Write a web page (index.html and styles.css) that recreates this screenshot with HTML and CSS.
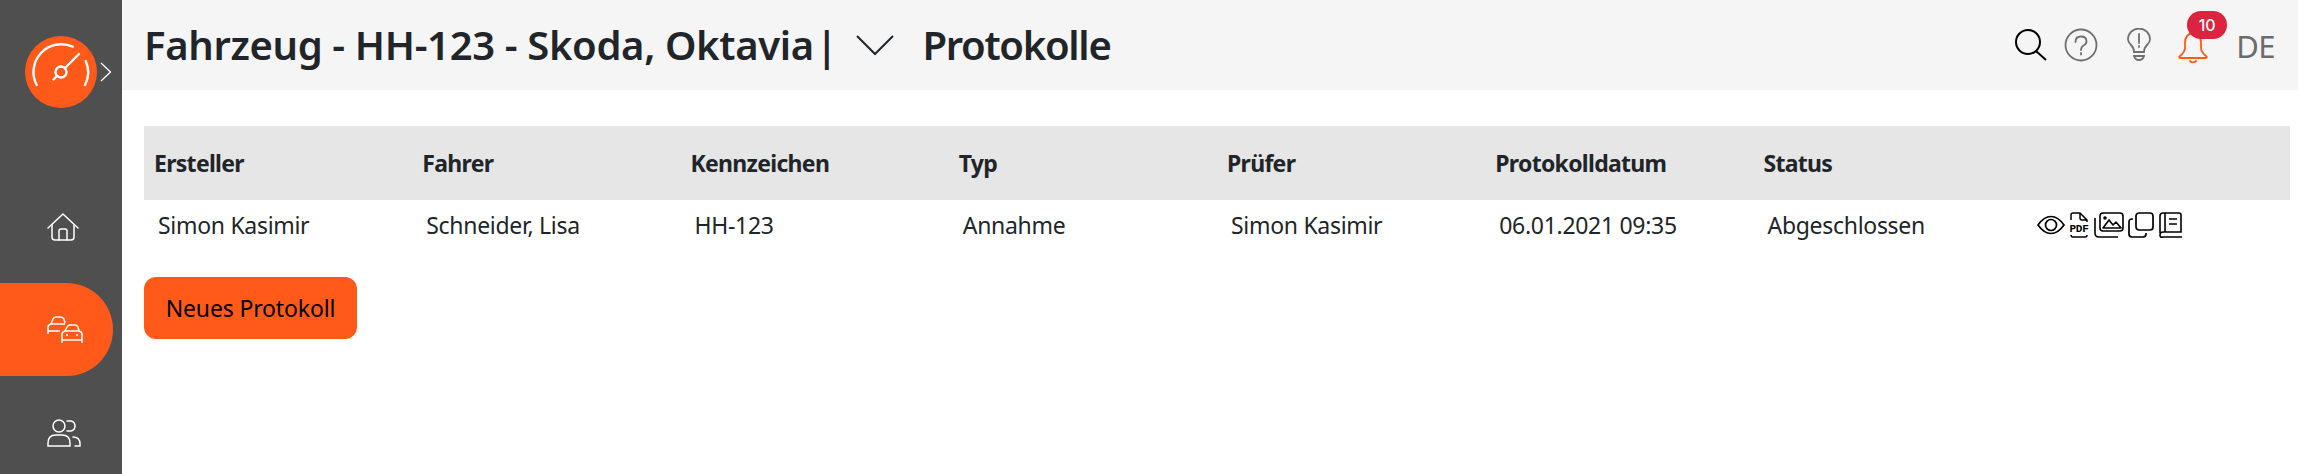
FILE: index.html
```html
<!DOCTYPE html>
<html lang="de">
<head>
<meta charset="utf-8">
<title>Protokolle</title>
<link rel="stylesheet" href="styles.css">
</head>
<body>
<div class="app">
  <aside class="sidebar">
    <div class="logo-row">
      <div class="logo">
        <svg viewBox="0 0 72 72" width="72" height="72" fill="none" stroke="#fff" stroke-width="2.400" stroke-linecap="round">
          <path d="M11.700 49A27.800 27.800 0 0 1 47.700 10.700"/>
          <path d="M60.700 25A27.500 27.500 0 0 1 60 49"/>
          <circle cx="36" cy="36" r="5.500"/>
          <path d="M40 32L54 18M32 40L28.500 43.500"/>
        </svg>
      </div>
      <svg class="chev" viewBox="0 0 12 20" width="12" height="20" fill="none" stroke="#fff" stroke-width="1.300"><path d="M1 1L10.500 10L1 19"/></svg>
    </div>
    <nav class="nav">
      <a class="nav-item">
        <svg viewBox="0 0 32 28" width="32" height="28" fill="none" stroke="#fff" stroke-width="1.500" stroke-linecap="round" stroke-linejoin="round"><path d="M1 15L16 1L31 15"/><path d="M5 12V24Q5 27 8 27H24Q27 27 27 24V12"/><path d="M12 27V18Q12 16 14 16H18Q20 16 20 18V27"/></svg>
      </a>
      <a class="nav-item active">
        <svg viewBox="0 0 36 28" width="36" height="28" fill="none" stroke="#fff" stroke-width="1.500" stroke-linejoin="round"><path d="M1 18V11Q1 9 4 8L6 3Q7 1 9 1H13Q16 1 17 3L18 7M4 8H18M1 15H13"/><path d="M15 27V18Q15 16 18 15L20 11Q21 9 23 9H28Q30 9 31 11L32 15Q35 16 35 18V27M15 24H35M18 15H32M19 19H21M29 19H31"/></svg>
      </a>
      <a class="nav-item">
        <svg viewBox="0 0 34 28" width="34" height="28" fill="none" stroke="#fff" stroke-width="1.500" stroke-linecap="round"><circle cx="12" cy="7" r="6"/><path d="M1 27V24Q1 16 9 16H15Q23 16 23 24V27Z"/><path d="M20 2H24Q28 3 28 7T24 12H20"/><path d="M26 18Q33 18 33 25V27H28"/></svg>
      </a>
    </nav>
  </aside>
  <main class="main">
    <header class="topbar">
      <h1 class="title title-main">Fahrzeug - HH-123 - Skoda, Oktavia<span class="pipe">|</span></h1>
      <svg class="title-chev" viewBox="0 0 40 22" width="40" height="22" fill="none" stroke="#212529" stroke-width="2"><path d="M2 2L20 20L38 2"/></svg>
      <h1 class="title title-sub">Protokolle</h1>
      <div class="tools">
        <svg class="tool tool-search" viewBox="0 0 34 34" width="34" height="34" fill="none" stroke="#000" stroke-width="2"><circle cx="14" cy="14" r="12"/><path d="M22 23L32 32"/></svg>
        <svg class="tool tool-help" viewBox="0 0 34 34" width="34" height="34" fill="none" stroke="#707070" stroke-width="1.800"><circle cx="17" cy="17" r="15.500"/><path d="M11.500 14Q11.500 8.500 17 8.500T22.500 13.500Q22.500 16 19.500 17.500Q17 19 17 22" stroke-linecap="round"/><path d="M17 25V26.500" stroke-linecap="round"/></svg>
        <svg class="tool tool-bulb" viewBox="0 0 24 34" width="24" height="34" fill="none" stroke="#707070" stroke-width="1.800" stroke-linecap="round"><path d="M7 24Q7 20 4 17Q1 14 1 11.500A11 11 0 0 1 23 11.500Q23 14 20 17Q17 20 17 24Z"/><path d="M12 6V15M12 18V19"/><path d="M7 28H17Q16 32 12 32T7 28Z"/></svg>
        <div class="bell">
          <svg viewBox="0 0 30 32" width="30" height="32" fill="none" stroke="#ff5a1a" stroke-width="1.800" stroke-linejoin="round" stroke-linecap="round"><path d="M15 2Q7 3 7 12V17Q7 21 2 25Q0 27 3 27H27Q30 27 28 25Q23 21 23 17V12Q23 3 15 2Z"/><path d="M12 30Q15 33 18 30"/></svg>
          <span class="badge">10</span>
        </div>
        <span class="lang">DE</span>
      </div>
    </header>
    <section class="content">
      <table class="grid">
        <thead>
          <tr>
            <th>Ersteller</th><th>Fahrer</th><th>Kennzeichen</th><th>Typ</th><th>Prüfer</th><th>Protokolldatum</th><th>Status</th><th></th>
          </tr>
        </thead>
        <tbody>
          <tr>
            <td>Simon Kasimir</td><td>Schneider, Lisa</td><td>HH-123</td><td>Annahme</td><td>Simon Kasimir</td><td>06.01.2021 09:35</td><td>Abgeschlossen</td>
            <td class="acts">
              <div class="acts-row">
              <svg viewBox="0 0 28 20" width="28" height="20" fill="none" stroke="#000" stroke-width="1.700"><path d="M1 10Q7 1.500 14 1.500T27 10Q21 18.500 14 18.500T1 10Z"/><circle cx="14" cy="10" r="5.500"/></svg>
              <svg viewBox="0 0 20 26" width="20" height="26" fill="none" stroke="#000" stroke-width="1.500"><path d="M2 8V3Q2 1 4 1H11L18 8V10M11 1V6Q11 8 13 8H18M2 23Q2 25 4 25H16Q18 25 18 23"/><text x="10" y="20" class="pdf">PDF</text></svg>
              <svg viewBox="0 0 30 26" width="30" height="26" fill="none" stroke="#000" stroke-width="1.600" stroke-linejoin="round"><rect x="6" y="1" width="23" height="18" rx="3"/><path d="M9 16L15 8L19 13L22 10L27 16Z"/><circle cx="11" cy="6" r="1"/><path d="M1 6V21Q1 25 5 25H24"/></svg>
              <svg viewBox="0 0 26 26" width="26" height="26" fill="none" stroke="#000" stroke-width="1.700"><rect x="8" y="1" width="17" height="17" rx="3"/><path d="M5 7H4Q1 7 1 10V22Q1 25 4 25H15Q18 25 18 22V21"/></svg>
              <svg viewBox="0 0 24 26" width="24" height="26" fill="none" stroke="#000" stroke-width="1.600"><path d="M1 21V4Q1 1 4 1H20Q22 1 22 3V20H4Q1 20 1 23T4 25H23M6 1V20M10 7H18M10 12H18"/></svg>
              </div>
            </td>
          </tr>
        </tbody>
      </table>
      <button class="btn" type="button">Neues Protokoll</button>
    </section>
  </main>
</div>
</body>
</html>
```
FILE: styles.css
```css
* { box-sizing: border-box; }
html, body { margin: 0; height: 100%; }
body { font-family: "Noto Sans", "Open Sans", sans-serif; color: #212529; background: #fff; overflow: hidden; }
.app { display: flex; height: 474px; }
.sidebar { width: 122px; flex: none; background: #4f4f4f; display: flex; flex-direction: column; }
.logo-row { display: flex; align-items: center; padding: 36px 0 0 25px; gap: 3px; }
.logo { width: 72px; height: 72px; border-radius: 50%; background: #ff5a1a; }
.logo svg { display: block; }
.chev { flex: none; }
.nav { display: flex; flex-direction: column; gap: 10px; margin-top: 72px; }
.nav-item { height: 93px; width: 113px; flex: none; display: flex; align-items: center; justify-content: flex-start; padding-left: 47px; }
.nav-item.active { background: #ff5a1a; border-radius: 0 47px 47px 0; }
.main { flex: 1; min-width: 0; display: flex; flex-direction: column; }
.topbar { height: 90px; flex: none; background: #f5f5f5; display: flex; align-items: center; padding-left: 22px; padding-right: 23px; }
.title { margin: 0; font-size: 40px; font-weight: 600; line-height: 90px; color: #212529; white-space: nowrap; }
.title-main { letter-spacing: -0.35px; }
.pipe { margin-left: 2px; }
.title-chev { margin: 0 27px 0 18px; flex: none; }
.title-sub { letter-spacing: -1.3px; }
.tools { margin-left: auto; display: flex; align-items: center; }
.tool { flex: none; }
.tool-search { margin-right: 16px; }
.tool-help { margin-right: 29px; }
.tool-bulb { margin-right: 27px; }
.bell { position: relative; width: 30px; height: 32px; margin-top: 4px; margin-right: 28px; }
.bell svg { display: block; }
.badge { position: absolute; left: 9px; top: -20px; width: 40px; height: 28px; border-radius: 14px; background: #dc2340; color: #fff; font-size: 16px; line-height: 28px; text-align: center; font-weight: 500; font-family: "Inter", sans-serif; }
.lang { font-size: 31px; color: #6c6c6c; letter-spacing: -0.5px; margin-top: 2px; line-height: 40px; }
.content { padding: 36px 8px 0 22px; }
.grid { width: 100%; table-layout: fixed; border-collapse: collapse; }
.grid th { background: #e6e6e6; height: 74px; text-align: left; padding: 0 10px; font-weight: 700; font-size: 23px; letter-spacing: -0.7px; color: #212529; }
.grid td { height: 50px; padding: 0 14px; font-size: 23px; letter-spacing: -0.3px; color: #212529; white-space: nowrap; }
.grid td.acts { padding: 0 0 0 15px; }
.acts-row { display: flex; align-items: center; gap: 4.5px; margin-top: -1px; }
.pdf { font-size: 11px; font-weight: 700; fill: #000; stroke: none; text-anchor: middle; font-family: "Liberation Mono", monospace; }
.btn { display: block; margin-top: 27px; width: 213px; height: 62px; border: 0; border-radius: 12px; background: #ff5a1a; color: #000; font-family: inherit; font-size: 23px; letter-spacing: -0.15px; padding: 0; }
```
